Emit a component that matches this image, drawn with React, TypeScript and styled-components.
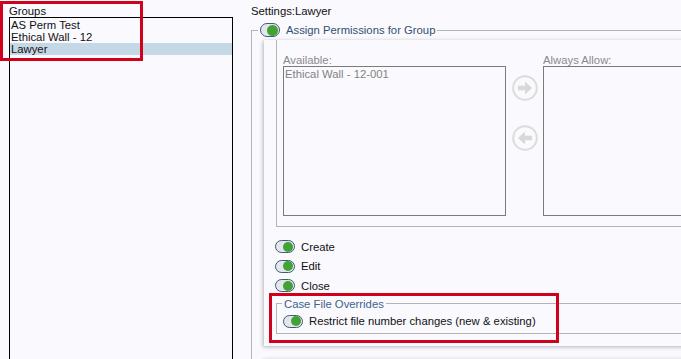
import styled, { createGlobalStyle } from 'styled-components';

const GlobalStyle = createGlobalStyle`
	html, body {
		margin: 0;
		background: #f9f9fe;
		overflow: hidden;
	}
	body {
		font-family: 'Liberation Sans', Arial, sans-serif;
		font-size: 11.3px;
		color: #111;
	}
`;

const Page = styled.div`
	position: relative;
	display: flex;
	width: 681px;
	height: 359px;
	padding-left: 9px;
	box-sizing: border-box;
	overflow: hidden;
`;

const LeftColumn = styled.div`
	width: 224px;
	flex: none;
	display: flex;
	flex-direction: column;
`;

const Title = styled.div`
	padding-top: 5px;
	line-height: 12px;
	height: 12px;
	white-space: nowrap;
`;

const GroupList = styled.ul`
	flex: 1;
	margin: 0;
	padding: 1px 0 0;
	list-style: none;
	border: 1px solid #000;
	border-bottom: none;
`;

const GroupItem = styled.li<{ $selected?: boolean }>`
	height: 12px;
	line-height: 12px;
	padding-left: 1px;
	background: ${p => (p.$selected ? '#c4d9e5' : 'transparent')};
`;

const RightColumn = styled.div`
	width: 520px;
	flex: none;
	margin-left: 18px;
	display: flex;
	flex-direction: column;
`;

const Heading = styled.div`
	padding-top: 5px;
	line-height: 13px;
	height: 13px;
	margin-bottom: 5px;
`;

const Fieldset = styled.fieldset`
	margin: 0;
	padding: 0 0 0 6px;
	min-width: 0;
	border: none;
	border-top: 1px solid #b4b4b4;
	border-left: 1px solid #b4b4b4;
	flex: 1;
`;

const Legend = styled.legend`
	display: flex;
	align-items: center;
	gap: 6px;
	padding: 0 2px;
	color: #33506e;
	line-height: 14px;
`;

const Card = styled.div`
	margin: 3px 0 0 6px;
	padding: 0 0 12px 11px;
	background: #f9f9fe;
	box-shadow: -1px 1px 4px rgba(0, 0, 0, 0.28);
`;

const NextCard = styled(Card)`
	margin-top: 13px;
	height: 20px;
`;

const Transfer = styled.div`
	margin-left: 1px;
	padding: 14px 0 10px 6px;
	display: flex;
	border-left: 1px solid #b4b4b4;
	border-bottom: 1px solid #b4b4b4;
`;

const ListColumn = styled.div<{ $width?: number }>`
	display: flex;
	flex-direction: column;
	${p => (p.$width ? `width: ${p.$width}px; flex: none;` : 'flex: 1;')}
`;

const ListLabel = styled.div`
	line-height: 12px;
	height: 12px;
	color: #8a8a8e;
`;

const ListBox = styled.div`
	height: 150px;
	box-sizing: border-box;
	border: 1px solid #7b7b7b;
	padding: 1px;
	color: #828282;
	line-height: 12px;
`;

const ArrowColumn = styled.div`
	width: 37px;
	flex: none;
	display: flex;
	flex-direction: column;
	align-items: center;
	padding-top: 21px;
	gap: 24px;
`;

const ToggleTrack = styled.span<{ $large?: boolean }>`
	display: inline-flex;
	flex: none;
	justify-content: flex-end;
	align-items: center;
	box-sizing: border-box;
	width: 20px;
	height: ${p => (p.$large ? 14 : 13)}px;
	padding: 0 1px;
	border: 1px solid #3f5b76;
	border-radius: 7px;
	background: #e3e6ea;
`;

const ToggleKnob = styled.span<{ $large?: boolean }>`
	width: ${p => (p.$large ? 11 : 10)}px;
	height: ${p => (p.$large ? 11 : 10)}px;
	border-radius: 50%;
	background: #42a235;
`;

const OptionRow = styled.div<{ $indent?: number }>`
	display: flex;
	align-items: center;
	gap: 6px;
	height: 19.5px;
	padding-left: ${p => p.$indent ?? 0}px;
	white-space: nowrap;
`;

const Options = styled.div`
	margin-top: 10px;
`;

const SubFieldset = styled.fieldset`
	margin: 1px 0 0 1px;
	padding: 1px 0 2px 5px;
	min-width: 0;
	border: 1px solid #b4b4b4;
	border-right: none;
`;

const SubLegend = styled.legend`
	padding: 0 2px;
	color: #40628a;
	line-height: 14px;
`;

const Highlight = styled.div<{ $left: number; $top: number; $w: number; $h: number }>`
	position: absolute;
	left: ${p => p.$left}px;
	top: ${p => p.$top}px;
	width: ${p => p.$w}px;
	height: ${p => p.$h}px;
	box-sizing: border-box;
	border: 3px solid #d0021b;
	pointer-events: none;
`;

const Toggle = ({ large }: { large?: boolean }) => (
	<ToggleTrack $large={large}>
		<ToggleKnob $large={large} />
	</ToggleTrack>
);

const ArrowIcon = ({ left }: { left?: boolean }) => (
	<svg width="26" height="26" viewBox="0 0 26 26">
		<circle cx="13" cy="13" r="11.8" fill="none" stroke="#dcdcdc" strokeWidth="2" />
		<path
			d="M6 10.8h7V6.5l7 6.5-7 6.5v-4.3H6z"
			fill="#d8d8d8"
			transform={left ? 'rotate(180 13 13)' : undefined}
		/>
	</svg>
);

const groups = ['AS Perm Test', 'Ethical Wall - 12', 'Lawyer'];
const permissions = ['Create', 'Edit', 'Close'];

const App = () => {
	return (
		<>
			<GlobalStyle />
			<Page>
				<LeftColumn>
					<Title>Groups</Title>
					<GroupList>
						{groups.map(g => (
							<GroupItem key={g} $selected={g === 'Lawyer'}>
								{g}
							</GroupItem>
						))}
					</GroupList>
				</LeftColumn>
				<RightColumn>
					<Heading>Settings:Lawyer</Heading>
					<Fieldset>
						<Legend>
							<Toggle large />
							Assign Permissions for Group
						</Legend>
						<Card>
							<Transfer>
								<ListColumn $width={223}>
									<ListLabel>Available:</ListLabel>
									<ListBox>Ethical Wall - 12-001</ListBox>
								</ListColumn>
								<ArrowColumn>
									<ArrowIcon />
									<ArrowIcon left />
								</ArrowColumn>
								<ListColumn>
									<ListLabel>Always Allow:</ListLabel>
									<ListBox />
								</ListColumn>
							</Transfer>
							<Options>
								{permissions.map(p => (
									<OptionRow key={p}>
										<Toggle />
										{p}
									</OptionRow>
								))}
							</Options>
							<SubFieldset>
								<SubLegend>Case File Overrides</SubLegend>
								<OptionRow $indent={1}>
									<Toggle />
									Restrict file number changes (new &amp; existing)
								</OptionRow>
							</SubFieldset>
						</Card>
						<NextCard />
					</Fieldset>
				</RightColumn>
				<Highlight $left={0} $top={1} $w={143} $h={60} />
				<Highlight $left={269} $top={293} $w={290} $h={50} />
			</Page>
		</>
	);
};

export default App;
